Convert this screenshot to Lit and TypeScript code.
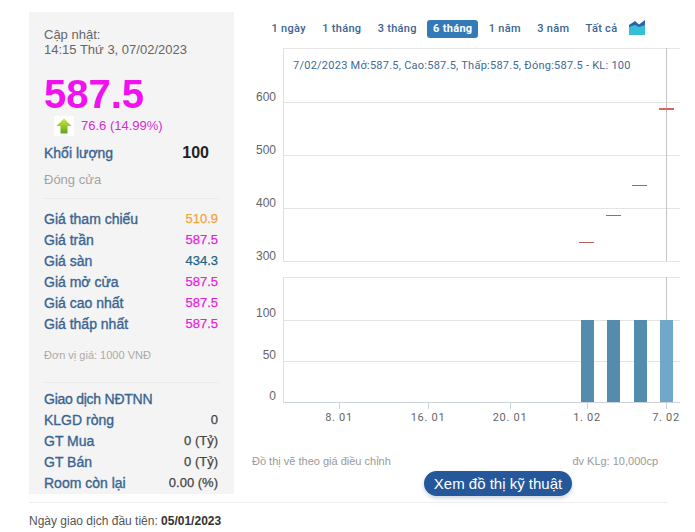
import { LitElement, html, css, svg } from "lit";
import { customElement } from "lit/decorators.js";

const GRID_TOP = [102, 155, 208, 261];
const GRID_VOL = [277, 320, 361, 402];
const PRICE = [["600", 101], ["500", 154], ["400", 207], ["300", 260]] as const;
const VOL = [["100", 317], ["50", 359], ["0", 400]] as const;
const TICKS = [["8. 01", 339], ["16. 01", 428], ["20. 01", 510], ["1. 02", 587], ["7. 02", 666]] as const;
const CANDLES = [[579, 594, 242], [606, 621, 215], [632, 647, 185]] as const;
const BARS = [581, 607, 634];
const TABS = ["1 ngày", "1 tháng", "3 tháng", "6 tháng", "1 năm", "3 năm", "Tất cả"];
const PRICES = [
  ["Giá tham chiếu", "510.9", "ref"],
  ["Giá trần", "587.5", "up"],
  ["Giá sàn", "434.3", "down"],
  ["Giá mở cửa", "587.5", "up"],
  ["Giá cao nhất", "587.5", "up"],
  ["Giá thấp nhất", "587.5", "up"],
];
const FOREIGN = [
  ["KLGD ròng", "0"],
  ["GT Mua", "0 (Tỷ)"],
  ["GT Bán", "0 (Tỷ)"],
  ["Room còn lại", "0.00 (%)"],
];

@customElement("app-root")
export class AppRoot extends LitElement {
  static styles = css`
    :host { display: block; width: 695px; height: 532px; overflow: hidden; background: #fff;
      font-family: "Liberation Sans", Arial, sans-serif; color: #333; }
    .wrap { padding: 12px 15px 0 29px; box-sizing: border-box; }
    .main { display: flex; gap: 18px; height: 482px; }
    .panel { width: 205px; flex: none; box-sizing: border-box; background: #f4f4f4; padding: 15px 15px 0 15px; }
    .update { font-size: 13px; line-height: 15px; color: #666; }
    .big { font-size: 40px; line-height: 46px; font-weight: 700; color: #f010f0; margin-top: 14px; }
    .change { display: flex; align-items: center; margin: -2px 0 0 10px; height: 21px; font-size: 13px; color: #d52ad5; gap: 7px; }
    .arrow { width: 20px; height: 20px; background: #fff; display: flex; align-items: center; justify-content: center; }
    .row { display: flex; justify-content: space-between; align-items: center; height: 21px; font-size: 14px; padding-right: 1px; }
    .lbl { color: #3a6491; -webkit-text-stroke: 0.35px #3a6491; }
    .val { font-size: 13px; -webkit-text-stroke: 0.25px currentColor; }
    .vol { margin-top: 5px; height: 24px; padding-right: 10px; }
    .vol .big-v { font-size: 16px; font-weight: 700; color: #222; }
    .closed { font-size: 13px; color: #a3a3a3; margin-top: 6px; height: 18px; line-height: 18px; }
    .sep { height: 1px; background: #ebebeb; margin-top: 9px; }
    .prices { margin-top: 9px; }
    .v { color: #444; }
    .ref { color: #f2a33a; }
    .up { color: #e81ee0; }
    .down { color: #1d6488; }
    .unit { font-size: 11px; color: #aaa; margin-top: 14px; height: 14px; line-height: 14px; }
    .sep2 { height: 1px; background: #ebebeb; margin-top: 20px; }
    .foreign { margin-top: 5px; }
    .tight { letter-spacing: -0.25px; }
    .right { flex: 1; min-width: 0; display: flex; flex-direction: column; }
    .right > * { flex: none; }
    .tabs { display: flex; align-items: center; height: 19px; margin: 7px 0 0 16.5px; gap: 10.3px; font-family: Roboto, sans-serif; font-size: 11px; font-weight: 500; letter-spacing: 0.3px; color: #3a6491; }
    .tab { padding: 2px 3px; line-height: 14px; border-radius: 3px; white-space: nowrap; }
    .tab.on { background: #337ab7; color: #fff; padding: 2px 6px; margin: 0 -3px; font-weight: 700; }
    .type { margin: -3px 0 0 -1.5px; }
    .chart { display: block; margin-top: 6px; }
    .note { display: flex; justify-content: space-between; font-size: 11px; color: #999; padding-right: 22px; height: 13px; line-height: 13px; margin-top: 31px; }
    .btn { align-self: flex-start; margin: 3px 0 0 172px; height: 25px; width: 148px; box-sizing: border-box; background: #25589a; color: #fff;
      border-radius: 13px; font-size: 15px; line-height: 25px; text-align: center; white-space: nowrap; box-shadow: 0 2px 4px rgba(80,100,130,.3); }
    .foot { border-top: 1px solid #eee; margin: 8px 12px 0 0; padding-top: 11px; font-size: 12px; line-height: 14px; color: #555; }
    .foot b { color: #333; }
    svg text { font-family: "Liberation Sans", Arial, sans-serif; font-size: 12px; fill: #666; }
    svg .tick { letter-spacing: 0.7px; font-family: Roboto, sans-serif; font-size: 11px; }
    svg .info { font-family: Roboto, sans-serif; font-size: 11px; fill: #3f6a94; letter-spacing: .25px; }
  `;

  private chart() {
    // the svg's origin sits at page coords (252, 44)
    return html`<svg class="chart" width="443" height="380" viewBox="252 44 443 380">
      ${[...GRID_TOP, ...GRID_VOL].map((y) => svg`<line x1="283" x2="680" y1=${y + 0.5} y2=${y + 0.5} stroke="#e4e4e4"/>`)}
      <line x1="283" x2="680" y1="48.5" y2="48.5" stroke="#e6e6e6"/>
      <line x1="283.5" x2="283.5" y1="48" y2="261" stroke="#e0e0e0"/>
      <line x1="283.5" x2="283.5" y1="277" y2="402" stroke="#e0e0e0"/>
      <line x1="283" x2="680" y1="402.5" y2="402.5" stroke="#ccd3dc"/>
      <line x1="666.5" x2="666.5" y1="48" y2="261" stroke="#c4c4c4"/>
      <line x1="666.5" x2="666.5" y1="277" y2="320" stroke="#c4c4c4"/>
      ${CANDLES.map(([a, b, y]) => svg`<line x1=${a} x2=${b} y1=${y + 0.5} y2=${y + 0.5} stroke="#b5625f"/>`)}
      <line x1="659" x2="674" y1="109" y2="109" stroke="#e2605c" stroke-width="2"/>
      ${BARS.map((x) => svg`<rect x=${x} y="320" width="13" height="82" fill="#548cae"/>`)}
      <rect x="660" y="320" width="13" height="82" fill="#6fa8c8"/>
      ${PRICE.map(([t, y]) => svg`<text x="276" y=${y} text-anchor="end">${t}</text>`)}
      ${VOL.map(([t, y]) => svg`<text x="276" y=${y} text-anchor="end">${t}</text>`)}
      ${TICKS.map(([t, x]) => svg`
        <line x1=${x + 0.5} x2=${x + 0.5} y1="402" y2="409" stroke="#ccd3dc"/>
        <text class="tick" x=${x} y="421" text-anchor="middle">${t}</text>`)}
      <text class="info" x="293" y="69">7/02/2023 Mở:587.5, Cao:587.5, Thấp:587.5, Đóng:587.5 - KL: 100</text>
    </svg>`;
  }

  render() {
    return html`<div class="wrap">
      <div class="main">
        <section class="panel">
          <div class="update">Cập nhật:<br />14:15 Thứ 3, 07/02/2023</div>
          <div class="big">587.5</div>
          <div class="change">
            <span class="arrow"><svg width="16" height="16" viewBox="0 0 16 16">
              <defs><linearGradient id="g" x1="0" y1="0" x2="0" y2="1"><stop offset="0" stop-color="#cfe83a"/><stop offset="1" stop-color="#5fa51c"/></linearGradient></defs>
              <path d="M8 0.5 15.5 8H11.5V15.5H4.5V8H0.5Z" fill="url(#g)"/></svg></span>
            <span>76.6 (14.99%)</span>
          </div>
          <div class="row vol"><span class="lbl">Khối lượng</span><span class="big-v">100</span></div>
          <div class="closed">Đóng cửa</div>
          <div class="sep"></div>
          <div class="prices">
            ${PRICES.map(([l, v, c]) => html`<div class="row"><span class="lbl">${l}</span><span class="val ${c}">${v}</span></div>`)}
          </div>
          <div class="unit">Đơn vị giá: 1000 VNĐ</div>
          <div class="sep2"></div>
          <div class="foreign">
            <div class="row"><span class="lbl tight">Giao dịch NĐTNN</span></div>
            ${FOREIGN.map(([l, v]) => html`<div class="row"><span class="lbl">${l}</span><span class="val v">${v}</span></div>`)}
          </div>
        </section>
        <section class="right">
          <nav class="tabs">
            ${TABS.map((t) => html`<span class="tab ${t === "6 tháng" ? "on" : ""}">${t}</span>`)}
            <svg class="type" width="16" height="16" viewBox="0 0 16 16">
              <path d="M0 16V6L6 2 10 5.5 16 1V16Z" fill="#2f62a8"/>
              <path d="M0 16V8L6 6 10 8 16 6V16Z" fill="#35c0d6"/>
            </svg>
          </nav>
          ${this.chart()}
          <div class="note"><span>Đồ thị vẽ theo giá điều chỉnh</span><span>đv KLg: 10,000cp</span></div>
          <div class="btn">Xem đồ thị kỹ thuật</div>
        </section>
      </div>
      <div class="foot">Ngày giao dịch đầu tiên: <b>05/01/2023</b></div>
    </div>`;
  }
}
